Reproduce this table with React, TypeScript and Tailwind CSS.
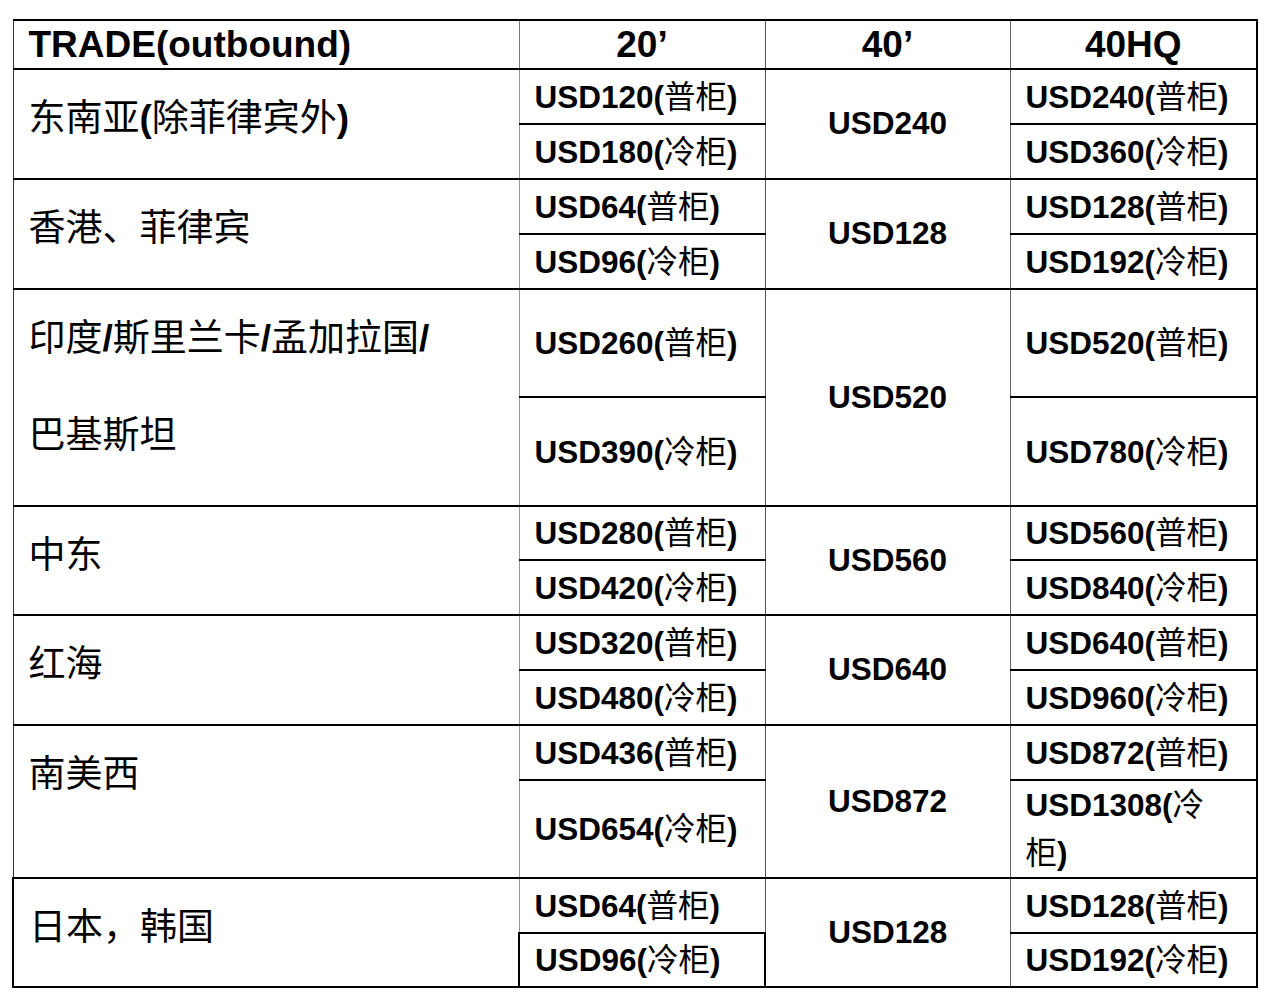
import React from 'react';

type Row = {
  region: string[];
  twenty: [string, string];
  forty: string;
  hq: [string, string];
  h: [string, string];
};

const rows: Row[] = [
  { region: ['东南亚(除菲律宾外)'], twenty: ['USD120(普柜)', 'USD180(冷柜)'], forty: 'USD240', hq: ['USD240(普柜)', 'USD360(冷柜)'], h: ['h-[55px]', 'h-[55px]'] },
  { region: ['香港、菲律宾'], twenty: ['USD64(普柜)', 'USD96(冷柜)'], forty: 'USD128', hq: ['USD128(普柜)', 'USD192(冷柜)'], h: ['h-[55px]', 'h-[55px]'] },
  { region: ['印度/斯里兰卡/孟加拉国/', '巴基斯坦'], twenty: ['USD260(普柜)', 'USD390(冷柜)'], forty: 'USD520', hq: ['USD520(普柜)', 'USD780(冷柜)'], h: ['h-[108px]', 'h-[109px]'] },
  { region: ['中东'], twenty: ['USD280(普柜)', 'USD420(冷柜)'], forty: 'USD560', hq: ['USD560(普柜)', 'USD840(冷柜)'], h: ['h-[54px]', 'h-[55px]'] },
  { region: ['红海'], twenty: ['USD320(普柜)', 'USD480(冷柜)'], forty: 'USD640', hq: ['USD640(普柜)', 'USD960(冷柜)'], h: ['h-[55px]', 'h-[55px]'] },
  { region: ['南美西'], twenty: ['USD436(普柜)', 'USD654(冷柜)'], forty: 'USD872', hq: ['USD872(普柜)', 'USD1308(冷柜)'], h: ['h-[55px]', 'h-[97px]'] },
  { region: ['日本，韩国'], twenty: ['USD64(普柜)', 'USD96(冷柜)'], forty: 'USD128', hq: ['USD128(普柜)', 'USD192(冷柜)'], h: ['h-[55px]', 'h-[54px]'] },
];

const isCjk = (ch: string) => /[\u3000-\u303f\u4e00-\u9fff\uff00-\uffef]/.test(ch);

// latin parts stay bold, CJK runs drop to normal weight like the Word original
function Mixed({ text }: { text: string }) {
  const parts: { t: string; cjk: boolean }[] = [];
  for (const ch of text) {
    const c = isCjk(ch);
    const last = parts[parts.length - 1];
    if (last && last.cjk === c) last.t += ch;
    else parts.push({ t: ch, cjk: c });
  }
  return (
    <>
      {parts.map((p, i) =>
        p.cjk ? (
          <span key={i} className="font-normal">{p.t}</span>
        ) : (
          <span key={i}>{p.t}</span>
        )
      )}
    </>
  );
}

const priceCell = 'pl-[15px] pr-4 align-middle text-[31.5px] leading-[48px] border-b-2 border-b-black';

export default function App() {
  return (
    <div className="min-h-screen bg-white pt-[19px] pl-[12px] font-['Liberation_Sans','Noto_Sans_CJK_SC',sans-serif] font-bold text-black">
      <table className="table-fixed border-collapse w-[1244px]">
        <colgroup>
          <col className="w-[506px]" />
          <col className="w-[246px]" />
          <col className="w-[245px]" />
          <col className="w-[247px]" />
        </colgroup>
        <thead>
          <tr className="h-[49px]">
            <th className="border-t-2 border-t-black border-b-2 border-b-black border-l border-l-[#333] pl-[15px] pr-4 text-left text-[37px] leading-none">
              TRADE(outbound)
            </th>
            <th className="border-t-2 border-t-black border-b-2 border-b-black border-l border-l-[#777] text-center text-[37px] leading-none">
              20’
            </th>
            <th className="border-t-2 border-t-black border-b-2 border-b-black border-l border-l-[#555] text-center text-[37px] leading-none">
              40’
            </th>
            <th className="border-t-2 border-t-black border-b-2 border-b-black border-l border-l-[#666] border-r-2 border-r-black text-center text-[37px] leading-none">
              40HQ
            </th>
          </tr>
        </thead>
        <tbody>
          {rows.map((r, idx) => {
            const last = idx === rows.length - 1;
            return (
              <React.Fragment key={idx}>
                <tr className={r.h[0]}>
                  <td
                    rowSpan={2}
                    className={`pl-[15px] pr-4 align-top text-[37px] leading-[97px] border-b-2 border-b-black ${
                      last ? 'border-l-2 border-l-black' : 'border-l border-l-[#333]'
                    }`}
                  >
                    {r.region.map((line, i) => (
                      <div key={i}>
                        <Mixed text={line} />
                      </div>
                    ))}
                  </td>
                  <td className={`${priceCell} border-l border-l-[#999]`}>
                    <Mixed text={r.twenty[0]} />
                  </td>
                  <td
                    rowSpan={2}
                    className="px-4 text-center align-middle text-[31.5px] border-b-2 border-b-black border-l border-l-[#555]"
                  >
                    {r.forty}
                  </td>
                  <td className={`${priceCell} border-l border-l-[#666] border-r-2 border-r-black`}>
                    <Mixed text={r.hq[0]} />
                  </td>
                </tr>
                <tr className={r.h[1]}>
                  <td
                    className={`${priceCell} ${
                      last ? 'border-l-2 border-l-black border-r-2 border-r-black' : 'border-l border-l-[#999]'
                    }`}
                  >
                    <Mixed text={r.twenty[1]} />
                  </td>
                  <td className={`${priceCell} border-l border-l-[#666] border-r-2 border-r-black`}>
                    <Mixed text={r.hq[1]} />
                  </td>
                </tr>
              </React.Fragment>
            );
          })}
        </tbody>
      </table>
    </div>
  );
}
